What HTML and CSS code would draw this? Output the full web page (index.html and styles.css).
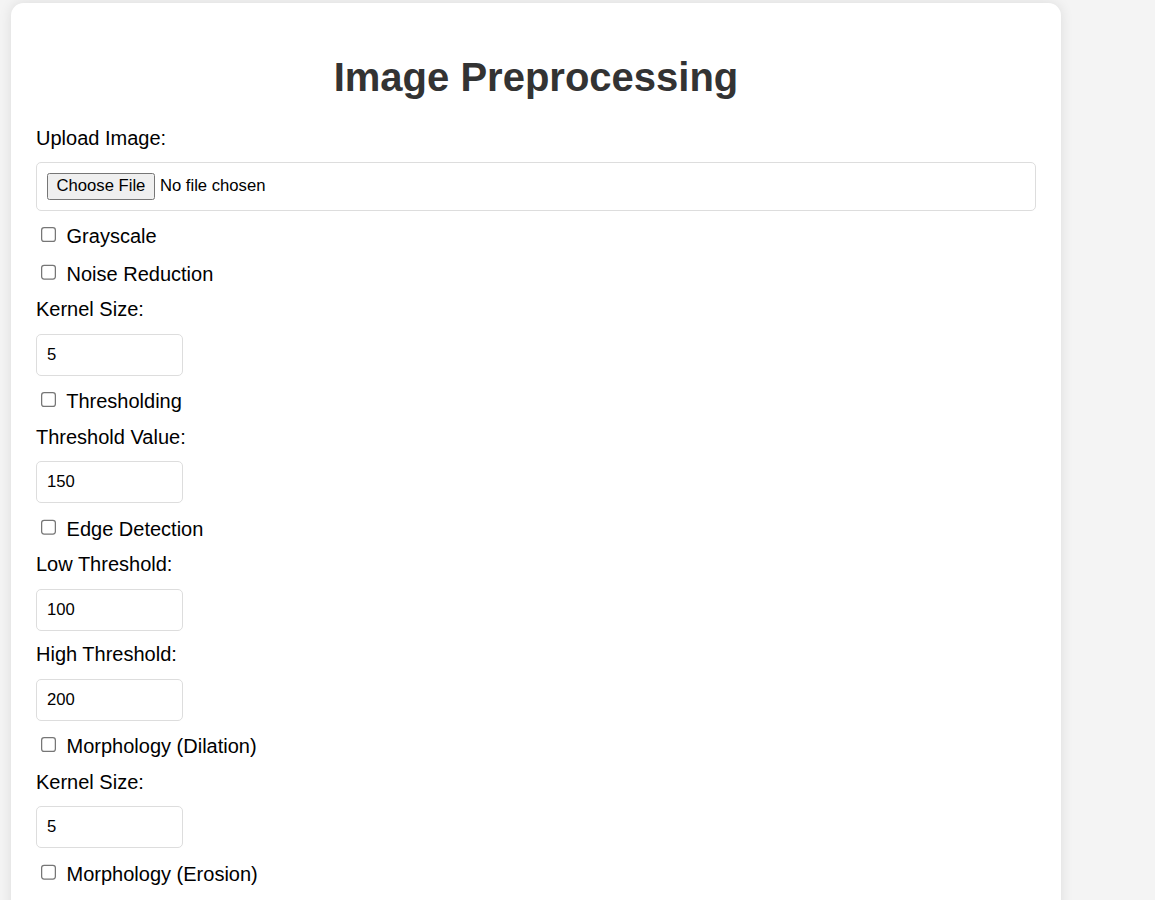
FILE: index.html
```html
<!DOCTYPE html>
<html lang="en">
<head>
<meta charset="utf-8">
<title>Image Preprocessing</title>
<link rel="stylesheet" href="styles.css">
</head>
<body>
<div class="container">
  <h1 class="title">Image Preprocessing</h1>
  <form class="form">
    <label class="field-label" for="image">Upload Image:</label>
    <input class="file-input" type="file" id="image">

    <label class="check-label"><input class="check" type="checkbox"> Grayscale</label>
    <label class="check-label"><input class="check" type="checkbox"> Noise Reduction</label>
    <label class="field-label" for="k1">Kernel Size:</label>
    <input class="num-input" type="number" id="k1" value="5">

    <label class="check-label"><input class="check" type="checkbox"> Thresholding</label>
    <label class="field-label" for="t1">Threshold Value:</label>
    <input class="num-input" type="number" id="t1" value="150">

    <label class="check-label"><input class="check" type="checkbox"> Edge Detection</label>
    <label class="field-label" for="lo">Low Threshold:</label>
    <input class="num-input" type="number" id="lo" value="100">
    <label class="field-label" for="hi">High Threshold:</label>
    <input class="num-input" type="number" id="hi" value="200">

    <label class="check-label"><input class="check" type="checkbox"> Morphology (Dilation)</label>
    <label class="field-label" for="k2">Kernel Size:</label>
    <input class="num-input" type="number" id="k2" value="5">

    <label class="check-label"><input class="check" type="checkbox"> Morphology (Erosion)</label>
  </form>
</div>
</body>
</html>
```

FILE: styles.css
```css
html {
  zoom: 1.25;
}

body {
  margin: 0;
  background: #f4f4f4;
  font-family: "Liberation Sans", Arial, sans-serif;
  font-size: 16px;
  color: #000;
}

.container {
  width: 800px;
  margin: 2.4px 0 0 8.8px;
  padding: 20px;
  background: #fff;
  border-radius: 10px;
  box-shadow: 0 0 10px rgba(0, 0, 0, 0.1);
}

.title {
  font-size: 32px;
  font-weight: bold;
  margin: 0.67em 0;
  text-align: center;
  color: #333;
}

.form {
  display: block;
}

.field-label,
.check-label {
  display: block;
  margin-bottom: 10px;
}

.file-input {
  display: block;
  box-sizing: border-box;
  width: 100%;
  padding: 8px;
  border: 1px solid #ddd;
  border-radius: 4px;
  margin-bottom: 10px;
  font-family: Arial, "Liberation Sans", sans-serif;
  font-size: 13.333px;
}

.num-input {
  display: block;
  width: 100px;
  padding: 8px;
  border: 1px solid #ddd;
  border-radius: 4px;
  margin-bottom: 10px;
  font-family: Arial, "Liberation Sans", sans-serif;
  font-size: 13.333px;
}

.check {
  margin: 3px 3px 3px 4px;
}
```
